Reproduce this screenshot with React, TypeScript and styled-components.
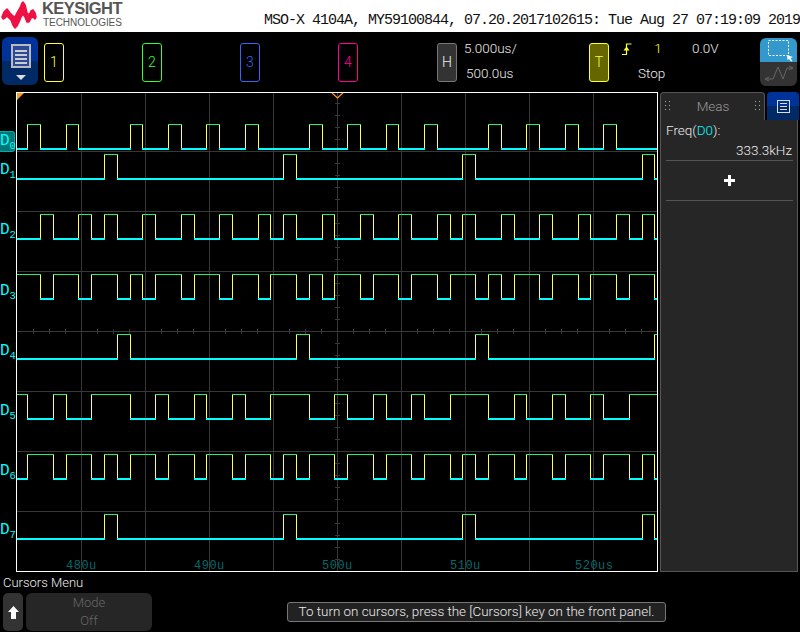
import React from "react";
import styled, { createGlobalStyle } from "styled-components";

const Global = createGlobalStyle`
  html, body { margin: 0; padding: 0; background: #000; }
  #root { width: 800px; height: 632px; overflow: hidden; }
`;
const UI = `"Roboto", "Liberation Sans", sans-serif`;

const Page = styled.div`
  width: 800px; height: 632px; background: #000; display: flex; flex-direction: column;
  font-family: ${UI}; font-weight: 300; color: #eee;
`;
const Header = styled.header`
  height: 32px; background: #fff; display: flex; align-items: flex-start; justify-content: space-between; overflow: hidden;
`;
const Logo = styled.div` display: flex; align-items: flex-start; `;
const Wordmark = styled.div` display: flex; flex-direction: column; margin-left: 5px; color: #555; font-family: "Liberation Sans", sans-serif; `;
const WordTop = styled.span` font-size: 16.5px; font-weight: 700; line-height: 13px; margin-top: 2px; letter-spacing: -0.55px; `;
const WordBottom = styled.span` font-size: 10px; line-height: 10px; margin: 3px 0 0 1px; letter-spacing: -0.05px; `;
const Title = styled.div`
  font-family: "Liberation Mono", monospace; font-size: 15px; line-height: 18px; color: #111; white-space: pre;
  margin-top: 12px; letter-spacing: -1px;
`;
const Toolbar = styled.div` height: 60px; position: relative; display: flex; align-items: center; `;
const MenuBtn = styled.div`
  width: 36px; height: 48px; margin: -2px 0 0 2px; border-radius: 6px; overflow: hidden;
  background: linear-gradient(#003399 0 50%, #002a66 50% 100%);
  display: flex; flex-direction: column; align-items: center;
`;
const Channels = styled.div` display: flex; gap: 78px; margin-left: 6px; `;
const ChBtn = styled.div<{ $c: string; $bg?: string }>`
  width: 20px; height: 39px; box-sizing: border-box; border: 1px solid ${(p) => p.$c}; border-radius: 3px;
  background: ${(p) => p.$bg || "transparent"}; color: ${(p) => p.$c}; display: flex; align-items: center; justify-content: center;
  font-size: 14px; font-family: ${UI};
`;
const HBtn = styled(ChBtn)` margin-left: 79px; color: #eee; `;
const TimeCol = styled.div` display: flex; flex-direction: column; width: 60px; margin: -2px 0 0 7px; font-size: 13.5px; line-height: 25px; `;
const TimeTwo = styled.span` margin-left: 2px; `;
const TBtn = styled(ChBtn)` margin-left: 65px; color: #ffff33; `;
const TrigGrid = styled.div`
  display: grid; grid-template-columns: 30px 12px 28px 60px; grid-auto-rows: 25px; margin: -2px 0 0 13px; font-size: 13.5px; line-height: 25px;
`;
const TrigIconCell = styled.div` display: flex; align-items: center; `;
const Yellow = styled.span` color: #ffff33; text-align: center; grid-column: 2; `;
const Volt = styled.span` grid-column: 4; `;
const Stop = styled.span` grid-column: 1 / 5; margin-left: 16px; `;
const ModeBtn = styled.div`
  position: absolute; right: 3px; top: 6px; width: 37px; height: 48px; border-radius: 6px; overflow: hidden;
  display: flex; flex-direction: column;
`;
const ModeTop = styled.div` height: 24px; background: #3399cc; `;
const ModeBottom = styled.div` flex: 1; background: #333; `;

const Main = styled.div` height: 480px; display: flex; `;
const Gutter = styled.div` width: 16px; position: relative; z-index: 1; `;
const DLabel = styled.div<{ $sel?: boolean }>`
  position: absolute; left: 0; width: 15px; height: 21px; box-sizing: border-box;
  color: #00ffff; font-size: 16px; font-weight: 400; line-height: 19px; font-family: "Liberation Mono", monospace; white-space: nowrap;
  ${(p) => p.$sel && `background:#007777; border:1px solid #00aaaa; border-left:none; border-radius:0 3px 3px 0; line-height:18px;`}
`;
const Sub = styled.span` font-size: 10.5px; position: relative; top: 4px; `;
const Plot = styled.div` width: 642px; height: 480px; box-sizing: border-box; border: 1px solid #fff; `;
const PlotSvg = styled.svg` display: block; width: 640px; height: 478px; overflow: visible; `;
const TimeText = styled.text` fill: #006a6a; font-family: "Liberation Mono", monospace; font-size: 12px; letter-spacing: 0.5px; `;

const Panel = styled.aside` width: 139px; margin-left: 2px; display: flex; flex-direction: column; `;
const TabRow = styled.div` display: flex; height: 28px; `;
const MeasTab = styled.div`
  width: 105px; box-sizing: border-box; background: #262626; border: 1px solid #555; border-bottom: none; border-radius: 4px 4px 0 0;
  display: flex; align-items: center; justify-content: space-between; padding: 0 3px 2px 4px; color: #999; font-size: 13.5px;
`;
const Dots = styled.svg` width: 6px; height: 9px; `;
const BlueTab = styled.div`
  width: 32px; margin-left: 2px; border-radius: 4px 4px 0 0; overflow: hidden;
  background: linear-gradient(#003399 0 50%, #002a66 50% 100%); display: flex; align-items: center; justify-content: center;
`;
const PanelBody = styled.div`
  flex: 1; background: #262626; box-sizing: border-box; border: 1px solid #555; border-top: none; margin-right: 1px;
  display: flex; flex-direction: column; font-size: 13.5px; color: #eee;
`;
const FreqName = styled.div` margin: 1px 0 0 5px; line-height: 18px; `;
const Cyan = styled.span` color: #00ffff; `;
const FreqValue = styled.div` text-align: right; padding: 2px 5px 1px 0; line-height: 18px; `;
const Divider = styled.div` height: 1px; background: #555; margin: 0 4px 0 5px; `;
const AddRow = styled.div` height: 39px; display: flex; align-items: center; justify-content: center; `;

const Bottom = styled.div` height: 60px; position: relative; display: flex; flex-direction: column; `;
const MenuTitle = styled.div` margin: 3px 0 0 3px; font-size: 13px; line-height: 16px; `;
const SoftKeys = styled.div` display: flex; gap: 3px; margin: 2px 0 0 3px; `;
const UpKey = styled.div` width: 20px; height: 38px; background: #333; border-radius: 5px; display: flex; align-items: center; justify-content: center; `;
const SoftKey = styled.div`
  width: 126px; height: 38px; background: #262626; border-radius: 6px; color: #666; font-size: 13px;
  display: flex; flex-direction: column; align-items: center; line-height: 18px; justify-content: center;
`;
const Message = styled.div`
  position: absolute; left: 287px; top: 30px; width: 379px; height: 20px; box-sizing: border-box;
  background: #222; border: 1px solid #777; border-radius: 3px; color: #eee; font-size: 13.4px; line-height: 18px; text-align: center; white-space: nowrap;
`;

const hiRows = [124, 154, 214, 274, 334, 394, 454, 514];
const traces: { high: boolean; edges: number[] }[] = [
  { high: false, edges: [27,40,66,78,130,142,168,181,206,219,245,258,309,322,347,360,386,398,424,437,488,501,526,539,565,578,603,616] },
  { high: false, edges: [104,117,283,296,462,475,642,654] },
  { high: false, edges: [40,53,78,91,104,117,142,155,181,194,219,232,258,270,283,296,322,334,360,373,398,411,437,450,462,475,501,514,539,552,578,590,616,629,642,654] },
  { high: true, edges: [40,53,78,91,117,130,142,155,181,194,219,232,258,270,296,309,322,334,360,373,398,411,437,450,475,488,501,514,539,552,578,590,616,629,654] },
  { high: false, edges: [117,130,296,309,475,488,654] },
  { high: true, edges: [27,53,66,91,130,155,168,194,206,232,245,270,309,334,347,373,386,411,424,450,488,514,526,552,565,590,603,629] },
  { high: false, edges: [27,53,66,91,104,117,130,155,168,194,206,232,245,270,283,296,309,334,347,373,386,411,424,450,462,475,488,514,526,552,565,590,603,629,642,654] },
  { high: false, edges: [104,117,283,296,462,475,642,654] },
];
const X0 = 17, X1 = 657;

function Trace({ row, high, edges }: { row: number; high: boolean; edges: number[] }) {
  const xs = [X0, ...edges, X1];
  const segs = [];
  let lvl = high;
  for (let i = 0; i < xs.length - 1; i++) {
    const a = xs[i], b = xs[i + 1];
    segs.push(
      lvl ? <rect key={"h" + i} x={a} y={row} width={b - a + (i === xs.length - 2 ? 0 : 1)} height={1} fill="#22f06a" />
          : <rect key={"l" + i} x={a} y={row + 24} width={b - a + (i === xs.length - 2 ? 0 : 1)} height={2} fill="#00ffff" />
    );
    lvl = !lvl;
  }
  return (
    <g>
      {segs}
      {edges.map((x) => <rect key={"v" + x} x={x} y={row + 1} width={1} height={23} fill="#ffff55" />)}
    </g>
  );
}

function Grid() {
  const cols = [81, 145, 209, 273, 337, 401, 465, 529, 593];
  const rows = [151, 211, 271, 331, 391, 451, 511];
  const hTicks: number[] = [];
  for (let x = 33; x < 657; x += 16) if (!cols.includes(x)) hTicks.push(x);
  const vTicks: number[] = [];
  for (let y = 103; y < 570; y += 12) if (!rows.includes(y)) vTicks.push(y);
  return (
    <g fill="#383838">
      {cols.map((x) => <rect key={x} x={x} y={93} width={1} height={478} />)}
      {rows.map((y) => <rect key={y} x={17} y={y} width={640} height={1} />)}
      {hTicks.map((x) => <rect key={x} x={x} y={329} width={1} height={5} />)}
      {vTicks.map((y) => <rect key={y} x={335} y={y} width={5} height={1} />)}
    </g>
  );
}

const DocIcon = ({ w, h }: { w: number; h: number }) => (
  <svg width={w} height={h} viewBox="0 0 13 13" shapeRendering="crispEdges">
    <rect x="0.5" y="0.5" width="12" height="12" fill="none" stroke="#ddd" />
    {[3, 6, 9].map((y) => <rect key={y} x="3" y={y} width="7" height="1" fill="#ddd" />)}
  </svg>
);
const labels = [
  { n: 0, y: 39, sel: true }, { n: 1, y: 69 }, { n: 2, y: 129 }, { n: 3, y: 190 },
  { n: 4, y: 250 }, { n: 5, y: 310 }, { n: 6, y: 370 }, { n: 7, y: 429 },
];
const times = [["480u", 66], ["490u", 194], ["500u", 322], ["510u", 450], ["520us", 575]] as const;

export default function App() {
  return (
    <Page>
      <Global />
      <Header>
        <Logo>
          <svg width="37" height="31" viewBox="0 0 37 31">
            <path fill="#ee1144" stroke="#ee1144" strokeWidth="1.6" strokeLinejoin="round" d="M2 17 L4 12 L7 9 L10 13 L13 16 L15 17 L17 13 L20 8 L22 3 L23 2 L25 5 L27 13 L29 15 L31 11 L33 10 L35 13 L36 17 L35 19 L33 17 L31 18 L29 22 L27 22 L25 17 L23 14 L21 17 L19 22 L17 26 L15 28 L13 25 L11 20 L9 18 L7 16 L5 18 L3 19 Z" />
          </svg>
          <Wordmark>
            <WordTop>KEYSIGHT</WordTop>
            <WordBottom>TECHNOLOGIES</WordBottom>
          </Wordmark>
        </Logo>
        <Title>MSO-X 4104A, MY59100844, 07.20.2017102615: Tue Aug 27 07:19:09 2019</Title>
      </Header>
      <Toolbar>
        <MenuBtn>
          <svg width="36" height="48" viewBox="0 0 36 48" shapeRendering="crispEdges">
            <rect x="10" y="8" width="18" height="22" fill="#2b4a9a" stroke="#bbb" strokeWidth="2" />
            {[13, 17, 21, 25].map((y) => <rect key={y} x="13" y={y} width="12" height="1.5" fill="#ccc" />)}
            <path d="M14 38 H24 L19 43 Z" fill="#ddd" shapeRendering="auto" />
          </svg>
        </MenuBtn>
        <Channels>
          <ChBtn $c="#ffff33">1</ChBtn>
          <ChBtn $c="#33ff33">2</ChBtn>
          <ChBtn $c="#3366ff">3</ChBtn>
          <ChBtn $c="#ff0099">4</ChBtn>
        </Channels>
        <HBtn $c="#777" $bg="#333">H</HBtn>
        <TimeCol>
          <span>5.000us/</span>
          <TimeTwo>500.0us</TimeTwo>
        </TimeCol>
        <TBtn $c="#ffff33" $bg="#666600">T</TBtn>
        <TrigGrid>
          <TrigIconCell>
            <svg width="10" height="12" viewBox="0 0 10 12" fill="none" stroke="#ffff33" strokeWidth="1.2">
              <path d="M0 11.5 H4.5 V1 H9.5" />
              <path d="M1.5 7.5 L4.5 3.5 L7.5 7.5 Z" fill="#ffff33" stroke="none" />
            </svg>
          </TrigIconCell>
          <Yellow>1</Yellow>
          <Volt>0.0V</Volt>
          <Stop>Stop</Stop>
        </TrigGrid>
        <ModeBtn>
          <ModeTop>
            <svg width="37" height="24" viewBox="0 0 37 24">
              <rect x="8.5" y="2.5" width="20" height="15" fill="none" stroke="#fff" strokeDasharray="2 1.5" />
              <path d="M27 17 L33 19 L30.5 20 L32.5 23 L31 23.5 L29 21 L27.5 22 Z" fill="#fff" />
            </svg>
          </ModeTop>
          <ModeBottom>
            <svg width="37" height="24" viewBox="0 0 37 24" fill="none" stroke="#666">
              <path d="M7 17 H13 L18 5 L23 17 L27 6 H32" />
              <path d="M5 17 L9 15 M5 17 L9 19 M33 6 L29 4 M33 6 L29 8" />
            </svg>
          </ModeBottom>
        </ModeBtn>
      </Toolbar>
      <Main>
        <Gutter>
          {labels.map((l) => (
            <DLabel key={l.n} $sel={l.sel} style={{ top: l.y }}>D<Sub>{l.n}</Sub></DLabel>
          ))}
        </Gutter>
        <Plot>
          <PlotSvg viewBox="17 93 640 478" shapeRendering="crispEdges">
            <Grid />
            {times.map(([t, x]) => <TimeText key={t} x={x} y={569}>{t}</TimeText>)}
            {traces.map((t, i) => <Trace key={i} row={hiRows[i]} high={t.high} edges={t.edges} />)}
            <path d="M17 93 H24 L17 100 Z" fill="#ff9922" shapeRendering="auto" />
            <path d="M332 93 L337.5 98 L343 93" fill="none" stroke="#ff9922" strokeWidth="1.2" shapeRendering="auto" />
          </PlotSvg>
        </Plot>
        <Panel>
          <TabRow>
            <MeasTab>
              <Dots viewBox="0 0 6 9" fill="#aaa">
                {[0, 4, 8].map((y) => [0, 4].map((x) => <rect key={x + "-" + y} x={x} y={y} width="1" height="1" />))}
              </Dots>
              <span>Meas</span>
              <Dots viewBox="0 0 6 9" fill="#aaa">
                {[0, 4, 8].map((y) => [0, 4].map((x) => <rect key={x + "-" + y} x={x} y={y} width="1" height="1" />))}
              </Dots>
            </MeasTab>
            <BlueTab><DocIcon w={13} h={13} /></BlueTab>
          </TabRow>
          <PanelBody>
            <FreqName>Freq(<Cyan>D0</Cyan>):</FreqName>
            <FreqValue>333.3kHz</FreqValue>
            <Divider />
            <AddRow>
              <svg width="11" height="11" viewBox="0 0 11 11" shapeRendering="crispEdges">
                <rect x="4" y="0" width="3" height="11" fill="#fff" />
                <rect x="0" y="4" width="11" height="3" fill="#fff" />
              </svg>
            </AddRow>
            <Divider />
          </PanelBody>
        </Panel>
      </Main>
      <Bottom>
        <MenuTitle>Cursors Menu</MenuTitle>
        <SoftKeys>
          <UpKey>
            <svg width="11" height="13" viewBox="0 0 11 13"><path d="M5.5 0 L11 6 H8 V13 H3 V6 H0 Z" fill="#fff" /></svg>
          </UpKey>
          <SoftKey><span>Mode</span><span>Off</span></SoftKey>
        </SoftKeys>
        <Message>To turn on cursors, press the [Cursors] key on the front panel.</Message>
      </Bottom>
    </Page>
  );
}
